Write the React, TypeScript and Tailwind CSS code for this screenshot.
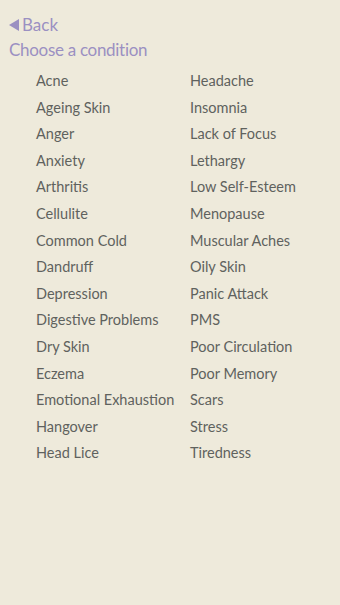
import React from 'react';

const LEFT = ['Acne','Ageing Skin','Anger','Anxiety','Arthritis','Cellulite','Common Cold','Dandruff','Depression','Digestive Problems','Dry Skin','Eczema','Emotional Exhaustion','Hangover','Head Lice'];
const RIGHT = ['Headache','Insomnia','Lack of Focus','Lethargy','Low Self-Esteem','Menopause','Muscular Aches','Oily Skin','Panic Attack','PMS','Poor Circulation','Poor Memory','Scars','Stress','Tiredness'];

export default function App() {
  return (
    <div className="w-[340px] h-[605px] bg-[#eeeadb] overflow-hidden" style={{ fontFamily: 'Lato, "Open Sans", sans-serif' }}>
      <div className="pt-[15px] pl-[9px]">
        <button className="flex items-center gap-[3px] text-[#9b90c2] text-[17px] leading-[20px]">
          <svg width="10" height="12" viewBox="0 0 10 12"><path d="M0 6 L10 0 L10 12 Z" fill="#9b90c2" /></svg>
          Back
        </button>
        <h1 className="mt-[5px] text-[#9b90c2] text-[17px] leading-[20px] tracking-[-0.3px]">Choose a condition</h1>
      </div>
      <div className="grid grid-cols-[154px_1fr] pl-[36px] mt-[8px]">
        <ul>
          {LEFT.map(c => <li key={c} className="h-[26.6px] leading-[26.6px] text-[14.5px] text-[#5f625e]">{c}</li>)}
        </ul>
        <ul>
          {RIGHT.map(c => <li key={c} className="h-[26.6px] leading-[26.6px] text-[14.5px] text-[#5f625e]">{c}</li>)}
        </ul>
      </div>
    </div>
  );
}
